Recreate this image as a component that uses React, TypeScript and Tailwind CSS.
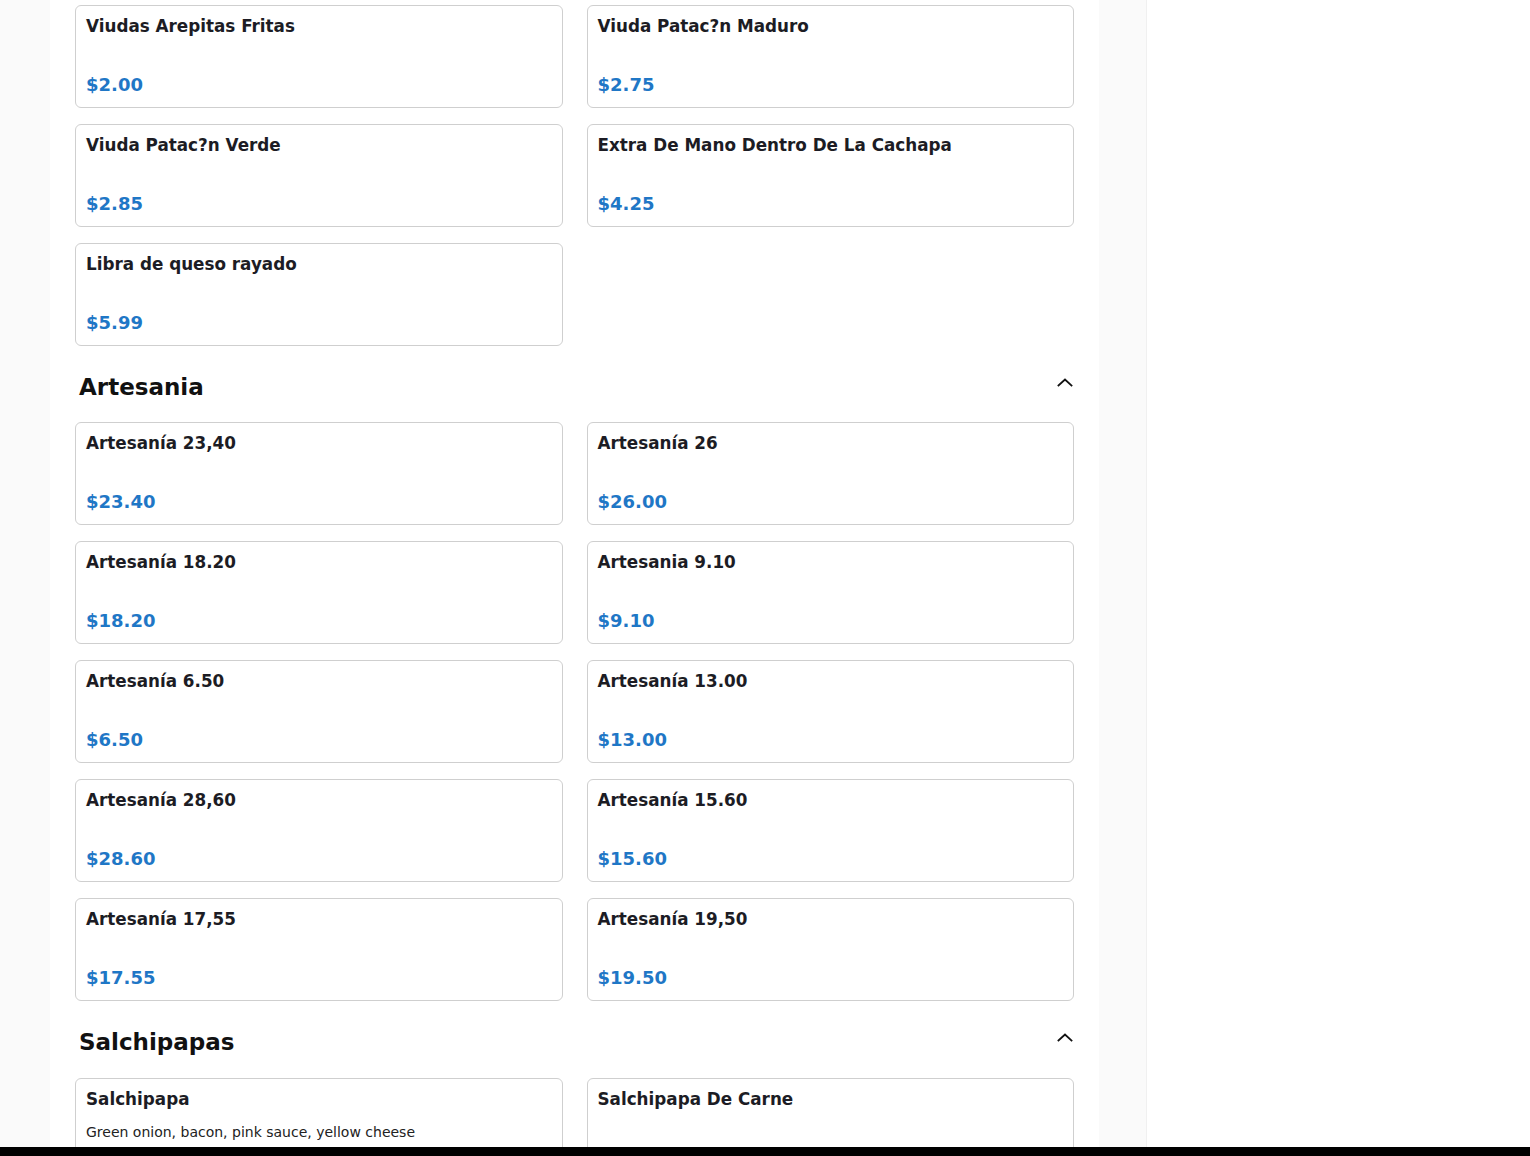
import React from "react";

type Item = { name: string; price: string; desc?: string };
type Section = { title?: string; items: Item[] };

const sections: Section[] = [
  {
    items: [
      { name: "Viudas Arepitas Fritas", price: "$2.00" },
      { name: "Viuda Patac?n Maduro", price: "$2.75" },
      { name: "Viuda Patac?n Verde", price: "$2.85" },
      { name: "Extra De Mano Dentro De La Cachapa", price: "$4.25" },
      { name: "Libra de queso rayado", price: "$5.99" },
    ],
  },
  {
    title: "Artesania",
    items: [
      { name: "Artesanía 23,40", price: "$23.40" },
      { name: "Artesanía 26", price: "$26.00" },
      { name: "Artesanía 18.20", price: "$18.20" },
      { name: "Artesania 9.10", price: "$9.10" },
      { name: "Artesanía 6.50", price: "$6.50" },
      { name: "Artesanía 13.00", price: "$13.00" },
      { name: "Artesanía 28,60", price: "$28.60" },
      { name: "Artesanía 15.60", price: "$15.60" },
      { name: "Artesanía 17,55", price: "$17.55" },
      { name: "Artesanía 19,50", price: "$19.50" },
    ],
  },
  {
    title: "Salchipapas",
    items: [
      { name: "Salchipapa", price: "$8.99", desc: "Green onion, bacon, pink sauce, yellow cheese" },
      { name: "Salchipapa De Carne", price: "$10.99" },
    ],
  },
];

function Chevron() {
  return (
    <svg width="16" height="9" viewBox="0 0 16 9" className="mt-[4px] mr-[1px] shrink-0">
      <polyline points="1.5,7.5 8,1.5 14.5,7.5" fill="none" stroke="#111" strokeWidth="1.8" strokeLinecap="square" />
    </svg>
  );
}

function Card({ item }: { item: Item }) {
  return (
    <div className="border border-[#cfcfcf] rounded-[6px] bg-white p-[10px]">
      <div className="text-[16.8px] leading-[21px] font-bold text-[#1c1c24]">{item.name}</div>
      <div className="mt-[12px] h-[20px] text-[14px] leading-[20px] text-[#222]">{item.desc ?? ""}</div>
      <div className="mt-[4px] text-[18px] leading-[24px] font-bold text-[#1f77c6]">{item.price}</div>
    </div>
  );
}

export default function App() {
  return (
    <div
      className="min-h-screen flex bg-white"
      style={{ fontFamily: '"DejaVu Sans", Verdana, sans-serif' }}
    >
      <div className="w-[1147px] shrink-0 bg-[#fafafa] pl-[50px] pr-[47px] border-r border-[#f0f0f0] flex">
        <div className="w-[1049px] bg-white px-[25px] pt-[5px] pb-[40px]">
          {sections.map((s, i) => (
            <div key={i}>
              {s.title && (
                <div
                  className={
                    i === 1
                      ? "mt-[28px] mb-[21px] pl-[4px] flex items-start justify-between"
                      : "mt-[28px] mb-[22px] pl-[4px] flex items-start justify-between"
                  }
                >
                  <h2 className="text-[23px] leading-[27px] font-bold text-[#111]">{s.title}</h2>
                  <Chevron />
                </div>
              )}
              <div className="grid grid-cols-2 gap-x-[24px] gap-y-[16px]">
                {s.items.map((it, j) => (
                  <Card key={j} item={it} />
                ))}
              </div>
            </div>
          ))}
        </div>
      </div>
      <div className="flex-1" />
      <div className="fixed bottom-0 left-0 right-0 h-[9px] bg-black" />
    </div>
  );
}
